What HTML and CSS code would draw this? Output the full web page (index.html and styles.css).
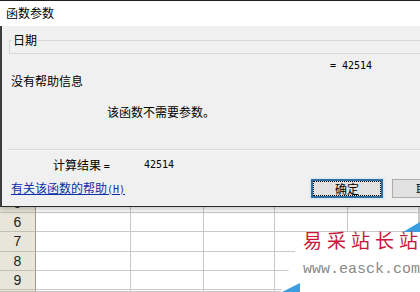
FILE: index.html
```html
<!DOCTYPE html>
<html>
 <head>
 	<title>函数参数</title>
 	<link rel="stylesheet" href="styles.css">
 </head>
 <body>
 	<div class="dialog">
 		<div class="titlebar">函数参数</div>
 		<div class="panel">
 			<fieldset class="argbox">
 				<legend>日期</legend>
 				<div class="argfill"></div>
 			</fieldset>
 			<div class="row value"><span class="num">= 42514</span></div>
 			<div class="row help">没有帮助信息</div>
 			<div class="row nodesc">该函数不需要参数。</div>
 			<div class="sep"></div>
 			<div class="row result"><span class="rlabel">计算结果 <span class="num">=</span></span><span class="num rval">42514</span></div>
 			<div class="row bottom">
 				<a class="helplink">有关该函数的帮助<span class="num">(H)</span></a>
 				<div class="btn ok"><span class="focus">确定</span></div>
 				<div class="btn">取消</div>
 			</div>
 		</div>
 	</div>

 	<div class="sheet">
 		<div class="hdr part"><span>5</span></div><div class="cell part"></div><div class="cell part"></div><div class="cell part"></div><div class="cell part"></div><div class="cell part"></div><div class="cell part"></div>
 		<div class="hdr">6</div><div class="cell"></div><div class="cell"></div><div class="cell"></div><div class="cell"></div><div class="cell"></div><div class="cell"></div>
 		<div class="hdr">7</div><div class="cell"></div><div class="cell"></div><div class="cell"></div><div class="cell"></div><div class="cell"></div><div class="cell"></div>
 		<div class="hdr">8</div><div class="cell"></div><div class="cell"></div><div class="cell"></div><div class="cell"></div><div class="cell"></div><div class="cell"></div>
 		<div class="hdr">9</div><div class="cell"></div><div class="cell"></div><div class="cell"></div><div class="cell"></div><div class="cell"></div><div class="cell"></div>
 		<div class="hdr"></div><div class="cell"></div><div class="cell"></div><div class="cell"></div><div class="cell"></div><div class="cell"></div><div class="cell"></div>
 	</div>

 	<div class="mark">
 		<svg class="markbg" width="140" height="72" viewBox="0 0 140 72">
 			<polygon points="22,12 140,12 140,72 1,72" fill="#fff"/>
 			<polygon points="123,12 140,2 140,12" fill="#3a9ee0"/>
 			<polygon points="2,72 20,63 20,72" fill="#3a9ee0"/>
 		</svg>
 		<div class="markcn">易采站长站</div>
 		<div class="markurl">www.easck.com</div>
 	</div>
 </body>
</html>
```

FILE: styles.css
```css
	body {
		margin: 0;
		width: 420px;
		height: 292px;
		overflow: hidden;
		background: #fff;
		font-family: "Noto Sans CJK SC", sans-serif;
		font-size: 12px;
		color: #000;
		position: relative;
	}
	.num {
		font-family: "DejaVu Sans Mono", monospace;
		font-size: 10px;
	}

	.dialog {
		position: relative;
		z-index: 1;
		height: 207px;
		box-shadow: 0 2px 6px rgba(0,0,0,.25);
		display: flex;
		flex-direction: column;
	}
	.titlebar {
		height: 25px;
		line-height: 24px;
		border-top: 1px solid #1f1f1f;
		background: #fff;
		padding-left: 6px;
	}
	.panel {
		flex: 1;
		background: #f0f0f0;
		border-left: 2px solid #3c3c3c;
		border-bottom: 1px solid #2b2b2b;
		display: flex;
		flex-direction: column;
		overflow: hidden;
	}
	.argbox {
		margin: 8px 0 0 7px;
		padding: 0 0 0 2px;
		border: 1px solid #d8d8d8;
		border-right: none;
	}
	.argbox legend {
		padding: 0 1px;
		line-height: 12px;
		height: 12px;
	}
	.argfill {
		height: 7px;
	}
	.row {
		line-height: 14px;
		height: 14px;
	}
	.value {
		margin-top: 3px;
		padding-left: 328px;
	}
	.help {
		margin-top: 3px;
		padding-left: 9px;
	}
	.nodesc {
		margin-top: 17px;
		padding-left: 105px;
	}
	.sep {
		margin: 30px 0 0 6px;
		height: 1px;
		background: #d6d6d6;
		border-bottom: 1px solid #fafafa;
	}
	.result {
		margin-top: 7px;
		padding-left: 51px;
		display: flex;
	}
	.rlabel {
		width: 91px;
	}
	.bottom {
		margin-top: 7px;
		height: 19px;
		display: flex;
		align-items: center;
		padding-left: 9px;
	}
	.helplink {
		flex: none;
		color: #0b2fa8;
		text-decoration: underline;
		width: 300px;
	}
	.btn {
		box-sizing: border-box;
		width: 72px;
		height: 19px;
		flex: none;
		margin-left: 9px;
		background: #e1e1e1;
		border: 1px solid #adadad;
		text-align: center;
		line-height: 17px;
	}
	.btn.ok {
		margin-left: 0;
		border: 2px solid #2f6ea3;
		box-shadow: 0 0 2px 1px #cfe4f7;
		padding: 1px;
		line-height: 13px;
	}
	.focus {
		display: block;
		height: 13px;
		outline: 1px dotted #000;
	}

	.sheet {
		display: grid;
		grid-template-columns: 36px 95px 73px 71px 73px 71px 1fr;
		grid-template-rows: 6px 19px 20px 19px 19px 1fr;
		height: 85px;
		font-family: "Liberation Sans", sans-serif;
		font-size: 14px;
	}
	.hdr {
		background: #e8e6da;
		border-right: 1px solid #9e9c8f;
		border-bottom: 1px solid #c3c1b4;
		text-align: center;
		line-height: 19px;
		color: #222;
		overflow: hidden;
	}
	.hdr.part span {
		display: block;
		margin-top: -13px;
	}
	.cell {
		border-right: 1px solid #c8c8c8;
		border-bottom: 1px solid #c8c8c8;
	}

	.mark {
		position: absolute;
		left: 280px;
		top: 220px;
		width: 140px;
		height: 72px;
		overflow: hidden;
		white-space: nowrap;
	}
	.markbg {
		position: absolute;
		left: 0;
		top: 0;
	}
	.markcn {
		position: relative;
		margin: 8px 0 0 23px;
		font-size: 19px;
		line-height: 24px;
		letter-spacing: 5px;
		color: #c8173a;
	}
	.markurl {
		position: relative;
		margin: 10px 0 0 23px;
		font-family: "Liberation Mono", monospace;
		font-size: 15px;
		line-height: 16px;
		color: #8a8a8a;
	}
```
